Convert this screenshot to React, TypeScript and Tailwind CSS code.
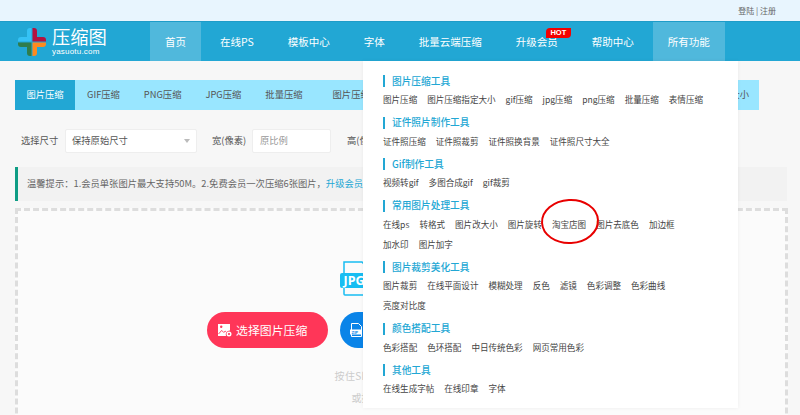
const navItems = ["首页", "在线PS", "模板中心", "字体", "批量云端压缩", "升级会员", "帮助中心", "所有功能"];

const tabs = ["GIF压缩", "PNG压缩", "JPG压缩", "批量压缩"];

const sections = [
	{
		title: "图片压缩工具",
		links: ["图片压缩", "图片压缩指定大小", "gif压缩", "jpg压缩", "png压缩", "批量压缩", "表情压缩"],
	},
	{
		title: "证件照片制作工具",
		links: ["证件照压缩", "证件照裁剪", "证件照换背景", "证件照尺寸大全"],
	},
	{
		title: "Gif制作工具",
		links: ["视频转gif", "多图合成gif", "gif裁剪"],
	},
	{
		title: "常用图片处理工具",
		links: ["在线ps", "转格式", "图片改大小", "图片旋转", "淘宝店图", "图片去底色", "加边框", "加水印", "图片加字"],
	},
	{
		title: "图片裁剪美化工具",
		links: ["图片裁剪", "在线平面设计", "模糊处理", "反色", "滤镜", "色彩调整", "色彩曲线", "亮度对比度"],
	},
	{
		title: "颜色搭配工具",
		links: ["色彩搭配", "色环搭配", "中日传统色彩", "网页常用色彩"],
	},
	{
		title: "其他工具",
		links: ["在线生成字帖", "在线印章", "字体"],
	},
];

function Logo() {
	return (
		<svg width="28" height="28" viewBox="0 0 28 28" className="shrink-0">
			<path d="M13.5 0h-1.5a3 3 0 0 0-3 3v6H3a3 3 0 0 0-3 3v1.5h13.5z" fill="#35c2f5" />
			<path d="M14.5 0h1.5a3 3 0 0 1 3 3v6h6a3 3 0 0 1 3 3v1.5H14.5z" fill="#b3123f" />
			<path d="M13.5 28h-1.5a3 3 0 0 1-3-3v-6H3a3 3 0 0 1-3-3v-1.5h13.5z" fill="#2f7d4b" />
			<path d="M14.5 28h1.5a3 3 0 0 0 3-3v-6h6a3 3 0 0 0 3-3v-1.5H14.5z" fill="#ff8a1e" />
		</svg>
	);
}

function JpgBadge() {
	return (
		<div className="relative h-[35px] w-[32px]">
			<svg width="32" height="35" viewBox="0 0 32 35" className="block">
				<path d="M4 1h18l7 7v25a1 1 0 0 1-1 1H5a1 1 0 0 1-1-1z" fill="none" stroke="#18bdf2" strokeWidth="1.5" />
				<rect x="0" y="12" width="32" height="15" rx="2" fill="#18bdf2" />
			</svg>
			<span className="absolute left-[4px] top-[12px] font-['Open_Sans',sans-serif] text-[12.5px] leading-[15px] font-bold text-white">JPG</span>
		</div>
	);
}

function PictureIcon() {
	return (
		<svg width="14" height="14" viewBox="0 0 14 14">
			<path d="M0 1h12v6.5a4 4 0 0 0-4 5.5H0z" fill="#fff" />
			<circle cx="3.2" cy="3.8" r="1.2" fill="#ff3658" />
			<path d="M0.5 11l3.2-3.6 2 2 1.5-1.2 1.2 1" stroke="#ff3658" strokeWidth="0.9" fill="none" />
			<circle cx="11" cy="11" r="1.8" fill="none" stroke="#fff" strokeWidth="1.4" />
		</svg>
	);
}

function ZipIcon() {
	return (
		<svg width="13" height="14" viewBox="0 0 13 14">
			<path d="M1.5 0.5h7l3 3v10h-10z" fill="none" stroke="#fff" strokeWidth="1" />
			<rect x="0" y="6.5" width="11" height="5" fill="#fff" />
			<text x="1.6" y="10.6" fontSize="4.2" fontWeight="700" fill="#0a84e8" fontFamily="Liberation Sans">ZIP</text>
		</svg>
	);
}

export default function App() {
	return (
		<div className="relative h-[415px] w-[800px] overflow-hidden bg-[#f7f7f7] font-['Noto_Sans_CJK_SC',sans-serif] text-[#444]">
			<div className="flex h-[21px] items-center justify-end bg-[#e8f5fe] pr-[24px] text-[8px] text-[#666]">
				登陆 | 注册
			</div>

			<nav className="flex h-[40px] border-t border-[#1e9cc8] bg-[#22a7d4] text-white">
				<div className="flex w-[150px] shrink-0 items-center pl-[18px]">
					<Logo />
					<div className="ml-[6px] flex flex-col">
						<span className="text-[18.3px] leading-[21px]">压缩图</span>
						<span className="font-['Liberation_Sans',sans-serif] text-[8px] leading-[10px] tracking-[0.2px]">yasuotu.com</span>
					</div>
				</div>
				<div className="flex gap-[4px]">
					{navItems.map((item, index) => (
						<div
							key={item}
							className={`relative flex items-center px-[15px] text-[10.5px] ${index === 0 || index === 7 ? "bg-[#50b8dc]" : ""}`}
						>
							{item}
							{item === "升级会员" && (
								<span className="absolute left-[45px] top-[6px] flex h-[10px] w-[25px] items-center justify-center rounded-tl-[4px] rounded-br-[4px] bg-[#f40000] font-['Liberation_Sans',sans-serif] text-[7.5px] font-bold text-white">
									HOT
								</span>
							)}
						</div>
					))}
				</div>
			</nav>

			<main className="px-[15px] pt-[19px]">
				<div className="flex h-[30px] w-[744px] items-center bg-[#99e6ff] text-[9.3px] text-[#555]">
					<div className="flex h-full w-[60px] items-center justify-center bg-[#22a7d4] text-white">图片压缩</div>
					{tabs.map((tab) => (
						<div key={tab} className="px-[12px]">{tab}</div>
					))}
					<div className="ml-[18px]">图片压缩指定大小</div>
					<div className="ml-auto pr-[10px]">图片改大小</div>
				</div>

				<div className="mt-[19px] flex h-[24px] items-center text-[9.3px] text-[#555]">
					<span className="ml-[6px] w-[44px]">选择尺寸</span>
					<div className="flex h-full w-[132px] items-center justify-between rounded-[2px] border border-[#eee] bg-white pl-[6px] pr-[6px]">
						<span>保持原始尺寸</span>
						<span className="h-0 w-0 border-x-[3.5px] border-t-[4px] border-x-transparent border-t-[#bbb]" />
					</div>
					<span className="ml-[15px] w-[40px]">宽(像素)</span>
					<div className="flex h-full w-[79px] items-center rounded-[2px] border border-[#eee] bg-white pl-[7px] text-[#999]">原比例</div>
					<span className="ml-[16px]">高(像素)</span>
				</div>

				<div className="mt-[14px] flex h-[34px] w-[772px] items-center border-l-[3.5px] border-[#0f9d85] bg-[#f2f2f2] pl-[9px] text-[9.3px] whitespace-nowrap text-[#666]">
					温馨提示：1.会员单张图片最大支持50M。2.免费会员一次压缩6张图片，
					<span className="text-[#22a7d4]">升级会员</span>
				</div>

				<div className="mt-[7px] flex h-[260px] w-[773px] flex-col items-center border-[3px] border-dashed border-[#ddd] bg-[#fbfbfb] pt-[50px]">
					<div className="flex w-[124px]">
						<JpgBadge />
					</div>
					<div className="mt-[16px] flex gap-[12px]">
						<div className="flex h-[36px] w-[121px] items-center gap-[4px] rounded-full bg-[#ff3658] pl-[11px] text-[11.9px] text-white">
							<PictureIcon />
							选择图片压缩
						</div>
						<div className="flex h-[36px] w-[256px] items-center rounded-full bg-[#0a84e8] pl-[10px]">
							<ZipIcon />
						</div>
					</div>
					<div className="mt-[20px] text-[10px] leading-[16px] tracking-[0.3px] text-[#ccc]">按住Shift或Ctrl键可多选图片</div>
					<div className="mt-[6px] text-[10px] leading-[16px] text-[#ccc]">或拖拽图片到此处上传</div>
				</div>
			</main>

			<div className="absolute left-[363px] top-[61px] h-[347px] w-[375px] bg-white pl-[20px] pt-[13px] shadow-[0_0_4px_rgba(0,0,0,0.06)]">
				{sections.map((section) => (
					<div key={section.title} className="mb-[6.5px]">
						<div className="mb-px flex h-[14px] items-center gap-[7px] text-[9.7px] font-medium text-[#22a7d4]">
							<span className="h-[12px] w-[2px] bg-[#22a7d4]" />
							{section.title}
						</div>
						<div className="flex w-[324px] flex-wrap gap-x-[10px] text-[8.55px] leading-[20px] text-[#444]">
							{section.links.map((link) => (
								<span key={link}>{link}</span>
							))}
						</div>
					</div>
				))}
			</div>

			<svg width="62" height="48" viewBox="0 0 62 48" className="absolute left-[539px] top-[198px]">
				<ellipse cx="31" cy="23.5" rx="28" ry="21.5" fill="none" stroke="#e80000" strokeWidth="2" transform="rotate(-3 31 23.5)" />
			</svg>
		</div>
	);
}
